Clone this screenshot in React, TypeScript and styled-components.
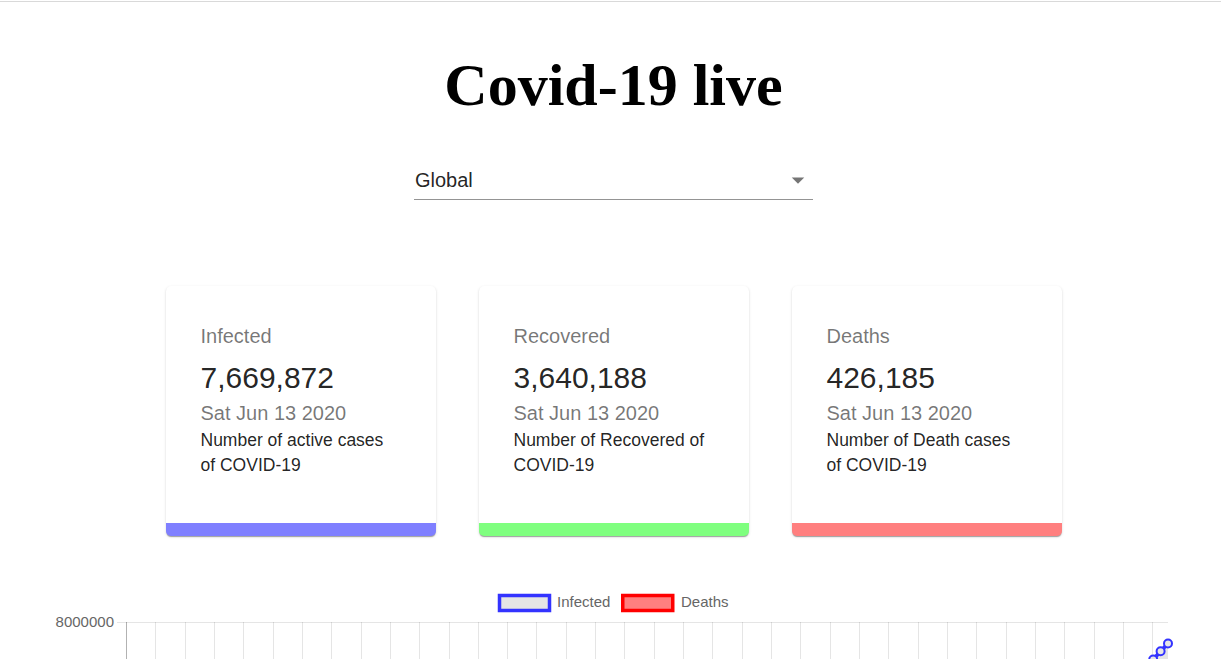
import React from "react";
import styled, { createGlobalStyle } from "styled-components";

const GlobalStyle = createGlobalStyle`
  html, body {
    margin: 0;
    padding: 0;
    background: #ffffff;
    overflow: hidden;
    font-family: "Liberation Sans", Arial, sans-serif;
  }
`;

const Page = styled.div`
  margin-top: 1px;
  border-top: 1px solid #d9d9d9;
  padding-left: 6px;
  display: flex;
  flex-direction: column;
  align-items: center;
`;

const Title = styled.h1`
  margin: 49px 0 0;
  font-family: "Liberation Serif", "Times New Roman", serif;
  font-weight: 700;
  font-size: 60px;
  line-height: 69px;
  color: #000;
`;

const SelectControl = styled.div`
  margin-top: 42px;
  width: 399px;
  box-sizing: border-box;
  display: flex;
  align-items: center;
  padding: 6px 0 7px 1px;
  border-bottom: 1px solid rgba(0, 0, 0, 0.42);
`;

const SelectValue = styled.span`
  flex: 1;
  font-size: 20px;
  line-height: 24px;
  color: rgba(0, 0, 0, 0.87);
`;

const ArrowIcon = styled.svg`
  width: 30px;
  height: 30px;
  margin: -3px 0;
  fill: rgba(0, 0, 0, 0.54);
  flex: none;
`;

const CardRow = styled.div`
  margin-top: 86px;
  display: flex;
  justify-content: center;
  gap: 43px;
`;

const Card = styled.div<{ $accent: string }>`
  width: 270px;
  height: 250px;
  box-sizing: border-box;
  padding: 35px 35px 0;
  background: #fff;
  border-radius: 5px;
  border-bottom: 13px solid ${(p) => p.$accent};
  box-shadow: 0px 2px 1px -1px rgba(0, 0, 0, 0.2),
    0px 1px 1px 0px rgba(0, 0, 0, 0.14), 0px 1px 3px 0px rgba(0, 0, 0, 0.12);
`;

const Label = styled.div`
  font-size: 20px;
  line-height: 30px;
  color: rgba(0, 0, 0, 0.54);
  margin-bottom: 7px;
`;

const Count = styled.div`
  font-size: 30px;
  line-height: 40px;
  color: rgba(0, 0, 0, 0.87);
`;

const DateText = styled.div`
  font-size: 20px;
  line-height: 30px;
  color: rgba(0, 0, 0, 0.54);
`;

const Description = styled.div`
  font-size: 17.5px;
  line-height: 25px;
  color: rgba(0, 0, 0, 0.87);
`;

const ChartWrap = styled.div`
  margin-top: 49px;
  width: 1113px;
  height: 200px;
`;

const ChartSvg = styled.svg`
  display: block;
  width: 1113px;
  height: 200px;
  overflow: visible;
  font-family: "Liberation Sans", Arial, sans-serif;
`;

const cards = [
  {
    label: "Infected",
    count: "7,669,872",
    desc: "Number of active cases of COVID-19",
    accent: "rgba(0, 0, 255, 0.5)",
  },
  {
    label: "Recovered",
    count: "3,640,188",
    desc: "Number of Recovered of COVID-19",
    accent: "rgba(0, 255, 0, 0.5)",
  },
  {
    label: "Deaths",
    count: "426,185",
    desc: "Number of Death cases of COVID-19",
    accent: "rgba(255, 0, 0, 0.5)",
  },
];

const OX = 57;
const OY = 585;

const gridXs = Array.from({ length: 36 }, (_, k) => Math.round(126 + 29.32 * k) - OX + 0.5);

const infectedPts: [number, number][] = [
  [1168, 643.5],
  [1160.6, 651.2],
  [1153.2, 659.5],
  [1145.8, 668],
  [1138.4, 676.2],
  [1131, 684],
  [1123.6, 692],
  [1116.2, 699.5],
  [1108.8, 707],
  [1101.4, 714.5],
].map(([x, y]) => [x - OX, y - OY]);

function Chart() {
  const linePts = infectedPts.map((p) => p.join(",")).join(" ");
  const last = infectedPts[infectedPts.length - 1];
  const fillPts = `${linePts} ${last[0]},200 ${infectedPts[0][0]},200`;
  return (
    <ChartSvg viewBox="0 0 1113 200">
      <rect x={442.5} y={10.5} width={50} height={15} fill="rgba(0,0,0,0.1)" stroke="#3333ff" strokeWidth={3.5} />
      <text x={500} y={22} fontSize={15} fill="#666">Infected</text>
      <rect x={565.75} y={10.5} width={50} height={15} fill="rgba(255,0,0,0.5)" stroke="red" strokeWidth={3.5} />
      <text x={624} y={22} fontSize={15} fill="#666">Deaths</text>

      <text x={57} y={42.3} fontSize={15} fill="#666" textAnchor="end">8000000</text>

      <line x1={60} y1={37.5} x2={1111} y2={37.5} stroke="rgba(0,0,0,0.1)" strokeWidth={1} />
      {gridXs.map((x, i) => (
        <line
          key={i}
          x1={x}
          y1={37}
          x2={x}
          y2={200}
          stroke={i === 0 ? "rgba(0,0,0,0.3)" : "rgba(0,0,0,0.1)"}
          strokeWidth={1}
        />
      ))}

      <polygon points={fillPts} fill="rgba(0,0,0,0.1)" />
      <polyline points={linePts} fill="none" stroke="#3333ff" strokeWidth={3.75} strokeLinejoin="round" />
      {infectedPts.map(([x, y], i) => (
        <circle key={i} cx={x} cy={y} r={4} fill="rgba(230,230,230,1)" stroke="#3333ff" strokeWidth={2} />
      ))}
    </ChartSvg>
  );
}

export default function App() {
  return (
    <>
      <GlobalStyle />
      <Page>
        <Title>Covid-19 live</Title>
        <SelectControl>
          <SelectValue>Global</SelectValue>
          <ArrowIcon viewBox="0 0 24 24">
            <path d="M7 10l5 5 5-5z" />
          </ArrowIcon>
        </SelectControl>
        <CardRow>
          {cards.map((c) => (
            <Card key={c.label} $accent={c.accent}>
              <Label>{c.label}</Label>
              <Count>{c.count}</Count>
              <DateText>Sat Jun 13 2020</DateText>
              <Description>{c.desc}</Description>
            </Card>
          ))}
        </CardRow>
        <ChartWrap>
          <Chart />
        </ChartWrap>
      </Page>
    </>
  );
}
